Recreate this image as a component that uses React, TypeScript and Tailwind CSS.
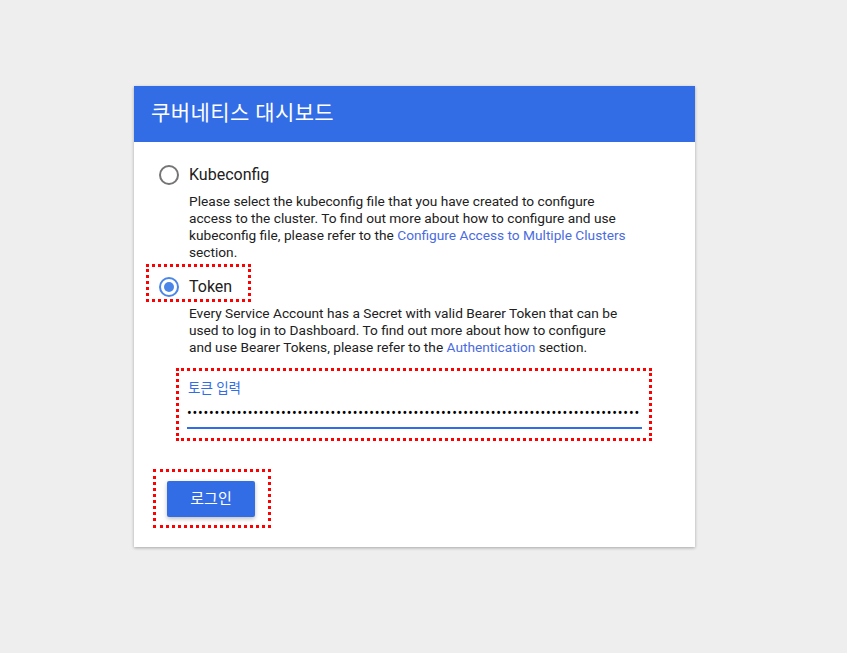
import React from "react";

function Radio({ checked }: { checked?: boolean }) {
  return (
    <div
      className={
        "w-[20px] h-[20px] rounded-full border-2 flex items-center justify-center shrink-0 " +
        (checked ? "border-[#4a86e8]" : "border-[#757575]")
      }
    >
      {checked && <div className="w-[10px] h-[10px] rounded-full bg-[#4a86e8]" />}
    </div>
  );
}

export default function App() {
  const font = { fontFamily: 'Roboto, "Noto Sans CJK KR", sans-serif' };
  return (
    <div className="w-[847px] h-[653px] bg-[#eeeeee] pt-[86px] pl-[134px]" style={font}>
      <div className="w-[561px] bg-white shadow-[0_1px_3px_rgba(0,0,0,0.3)] relative">
        <div className="h-[56px] bg-[#326de6] flex items-center pl-[17px] text-white text-[21px] tracking-[0.4px]">
          쿠버네티스 대시보드
        </div>
        <div className="pl-[25px] pr-[40px] pt-[23px] pb-[30px] text-[#212121]">
          <div className="flex items-center h-[20px]">
            <Radio />
            <span className="ml-[10px] text-[16px] leading-[20px]">Kubeconfig</span>
          </div>
          <p className="ml-[30px] mt-[8px] w-[439px] text-[13.7px] leading-[17px]">
            Please select the kubeconfig file that you have created to configure access to the cluster. To find
            out more about how to configure and use kubeconfig file, please refer to the{" "}
            <span className="text-[#4a6be0]">Configure Access to Multiple Clusters</span> section.
          </p>
          <div className="flex items-center h-[20px] mt-[16px] relative">
            <Radio checked />
            <span className="ml-[10px] text-[16px] leading-[20px]">Token</span>
            <div className="absolute left-[-13px] top-[-13px] w-[105px] h-[38px] border-[3px] border-dotted border-[#ff0000]" />
          </div>
          <p className="ml-[30px] mt-[8px] w-[439px] text-[13.7px] leading-[17px]">
            Every Service Account has a Secret with valid Bearer Token that can be used to log in to Dashboard. To
            find out more about how to configure and use Bearer Tokens, please refer to the{" "}
            <span className="text-[#4a6be0]">Authentication</span> section.
          </p>
          <div className="ml-[28px] mt-[25px] w-[455px] relative">
            <div className="text-[13.5px] leading-[14px] text-[#326de6] pl-[1px]">토큰 입력</div>
            <div className="mt-[10px] h-[16px] whitespace-nowrap text-[14px] leading-[16px] text-black tracking-[0.8px]">
              {"•".repeat(82)}
            </div>
            <div className="mt-[6px] h-[2px] bg-[#326de6]" />
            <div className="absolute left-[-11px] top-[-13px] w-[476px] h-[73px] border-[3px] border-dotted border-[#ff0000]" />
          </div>
          <div className="mt-[52px] ml-[8px] relative w-[88px]">
            <div className="h-[36px] w-[88px] rounded-[2px] bg-[#326de6] text-white text-[15px] flex items-center justify-center shadow-[0_2px_4px_rgba(0,0,0,0.25)]">
              로그인
            </div>
            <div className="absolute left-[-14px] top-[-12px] w-[118px] h-[59px] border-[3px] border-dotted border-[#ff0000]" />
          </div>
        </div>
      </div>
    </div>
  );
}
